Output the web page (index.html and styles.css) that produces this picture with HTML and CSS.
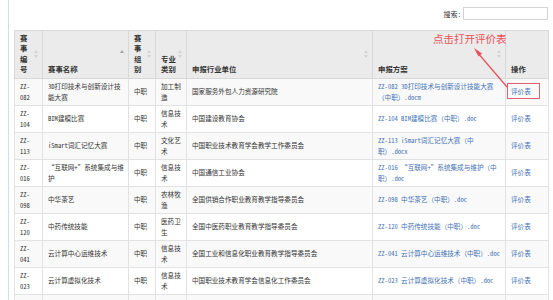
FILE: index.html
```html
<!DOCTYPE html>
<html lang="zh-CN">
<head>
<meta charset="utf-8">
<title>赛事评价表</title>
<link rel="stylesheet" href="styles.css">
</head>
<body>
<div class="page">
  <div class="toolbar">
    <label class="search">搜索:<input class="search-input" type="text"></label>
  </div>
  <table class="grid">
    <colgroup>
      <col class="c-no"><col class="c-name"><col class="c-group"><col class="c-cat"><col class="c-unit"><col class="c-plan"><col class="c-op">
    </colgroup>
    <thead>
      <tr>
        <th class="sort">赛事编号</th>
        <th class="sort asc">赛事名称</th>
        <th class="sort">赛事组别</th>
        <th class="sort">专业类别</th>
        <th class="sort">申报行业单位</th>
        <th class="sort">申报方案</th>
        <th class="plain">操作</th>
      </tr>
    </thead>
    <tbody>
      <tr><td>ZZ-082</td><td>3D打印技术与创新设计技能大赛</td><td>中职</td><td>加工制造</td><td>国家服务外包人力资源研究院</td><td><a href="#">ZZ-082 3D打印技术与创新设计技能大赛（中职）.docm</a></td><td><a href="#">评价表</a></td></tr>
      <tr><td>ZZ-104</td><td>BIM建模比赛</td><td>中职</td><td>信息技术</td><td>中国建设教育协会</td><td><a href="#">ZZ-104 BIM建模比赛（中职）.doc</a></td><td><a href="#">评价表</a></td></tr>
      <tr><td>ZZ-113</td><td>iSmart词汇记忆大赛</td><td>中职</td><td>文化艺术</td><td>中国职业技术教育学会教学工作委员会</td><td><a href="#">ZZ-113 iSmart词汇记忆大赛（中职）.docx</a></td><td><a href="#">评价表</a></td></tr>
      <tr><td>ZZ-016</td><td>“互联网+”系统集成与维护</td><td>中职</td><td>信息技术</td><td>中国通信工业协会</td><td><a href="#">ZZ-016 “互联网+”系统集成与维护（中职）.doc</a></td><td><a href="#">评价表</a></td></tr>
      <tr><td>ZZ-098</td><td>中华茶艺</td><td>中职</td><td>农林牧渔</td><td>全国供销合作职业教育教学指导委员会</td><td><a href="#">ZZ-098 中华茶艺（中职）.doc</a></td><td><a href="#">评价表</a></td></tr>
      <tr><td>ZZ-120</td><td>中药传统技能</td><td>中职</td><td>医药卫生</td><td>全国中医药职业教育教学指导委员会</td><td><a href="#">ZZ-120 中药传统技能（中职）.doc</a></td><td><a href="#">评价表</a></td></tr>
      <tr><td>ZZ-041</td><td>云计算中心运维技术</td><td>中职</td><td>信息技术</td><td>全国工业和信息化职业教育教学指导委员会</td><td><a href="#">ZZ-041 云计算中心运维技术（中职）.doc</a></td><td><a href="#">评价表</a></td></tr>
      <tr><td>ZZ-023</td><td>云计算虚拟化技术</td><td>中职</td><td>信息技术</td><td>中国职业技术教育学会信息化工作委员会</td><td><a href="#">ZZ-023 云计算虚拟化技术（中职）.doc</a></td><td><a href="#">评价表</a></td></tr>
      <tr class="tail"><td></td><td></td><td></td><td></td><td></td><td></td><td></td></tr>
    </tbody>
  </table>
  <div class="note">点击打开评价表</div>
  <svg class="note-arrow" width="40" height="44" viewBox="0 0 40 44">
    <line x1="6" y1="7" x2="36" y2="42" stroke="#e8505a" stroke-width="1.2"/>
    <path d="M3 3 L11 8.5 L7.5 11.5 Z" fill="#e8505a"/>
  </svg>
  <div class="note-box"></div>
</div>
</body>
</html>
```

FILE: styles.css
```css
html, body {
  margin: 0;
  padding: 0;
  background: #fff;
}

.page {
  position: relative;
  margin-left: 8px;
  border-left: 1px solid #d7dde8;
  padding: 7px 5px 0 5px;
  min-height: 300px;
  font-family: "Noto Sans Mono CJK SC", "Noto Sans CJK SC", "Liberation Mono", monospace;
  color: #333;
}

.toolbar {
  display: flex;
  justify-content: flex-end;
  align-items: center;
  height: 13px;
  margin-bottom: 10px;
}

.search {
  display: flex;
  align-items: center;
  gap: 2px;
  font-size: 7px;
  color: #333;
}

.search-input {
  box-sizing: border-box;
  width: 85px;
  height: 13px;
  margin: 0;
  padding: 0;
  border: 1px solid #d4d4d4;
  background: #fff;
}

.grid {
  width: 534px;
  table-layout: fixed;
  border-collapse: collapse;
  border: 1px solid #dcdcdc;
}

.c-no { width: 28px; }
.c-name { width: 86px; }
.c-group { width: 27px; }
.c-cat { width: 31px; }
.c-unit { width: 186px; }
.c-plan { width: 133px; }
.c-op { width: 43px; }

.grid th {
  height: 47px;
  box-sizing: border-box;
  background-color: #ebebeb;
  border: 1px solid #d8d8d8;
  vertical-align: bottom;
  text-align: left;
  padding: 2px 10px 3px 5px;
  font-size: 7.4px;
  line-height: 10.4px;
  font-weight: bold;
  color: #333;
}

.grid th.sort {
  background-image: url("data:image/svg+xml,%3Csvg xmlns='http://www.w3.org/2000/svg' width='4' height='8'%3E%3Cpath d='M2 0L4 3H0z' fill='%23d2d2d2'/%3E%3Cpath d='M2 8L0 5H4z' fill='%23d2d2d2'/%3E%3C/svg%3E");
  background-repeat: no-repeat;
  background-position: right 4px center;
}

.grid th.sort.asc {
  background-image: url("data:image/svg+xml,%3Csvg xmlns='http://www.w3.org/2000/svg' width='4' height='8'%3E%3Cpath d='M2 0L4 3H0z' fill='%23a0a0a0'/%3E%3C/svg%3E");
}

.grid th.plain {
  padding-right: 5px;
}

.grid td {
  border: 1px solid #e2e2e2;
  padding: 2.5px 4px 2.5px 5px;
  font-size: 6.6px;
  line-height: 10.5px;
  vertical-align: middle;
  color: #333;
  overflow-wrap: anywhere;
}

.grid tbody tr:nth-child(odd) td {
  background: #f9f9f9;
}

.grid tr.tail td {
  height: 26px;
}

.grid a {
  color: #3f72b5;
  text-decoration: none;
}

.note {
  position: absolute;
  left: 424px;
  top: 32px;
  font-family: "Noto Sans CJK SC", sans-serif;
  font-size: 10.5px;
  line-height: 14px;
  color: #ea5058;
}

.note-arrow {
  position: absolute;
  left: 462px;
  top: 45px;
}

.note-box {
  position: absolute;
  left: 498px;
  top: 83px;
  width: 31px;
  height: 14px;
  border: 1px solid #e0606e;
}
```
